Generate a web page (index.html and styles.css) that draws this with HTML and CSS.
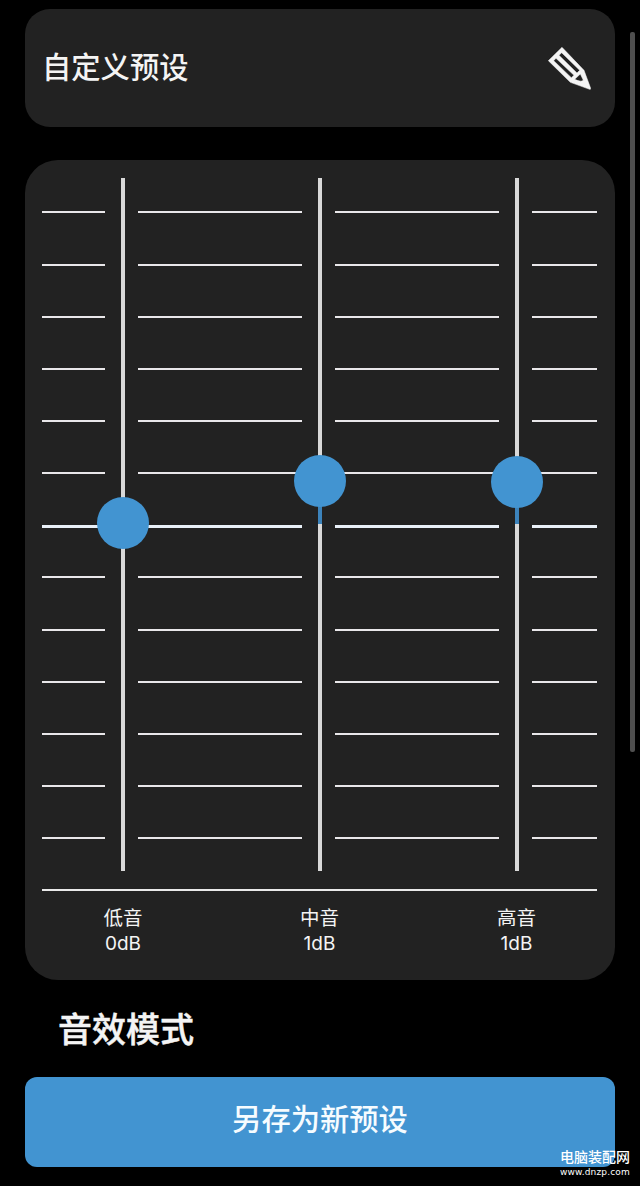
FILE: index.html
```html
<!DOCTYPE html>
<html lang="zh-CN">
<head>
    <meta charset="UTF-8">
    <meta name="viewport" content="width=device-width, initial-scale=1.0">
    <title>自定义预设</title>
    <link rel="stylesheet" href="styles.css">
</head>
<body>
    <div class="page">
        <div class="preset card">
            <span class="preset-name">自定义预设</span>
            <svg class="edit-icon" viewBox="84 140 129 129">
                <path fill="#f4f4f4" stroke="#f4f4f4" stroke-width="1.5" fill-rule="evenodd" d="M126 141L192 210L212 264Q212 268 209 267L151 246L85 181Z M125 157L117 165L171 218L179 210Z M108 174L101 181L154 232L162 225Z M181 221L190 240Q183 246 164 237Z"/>
            </svg>
        </div>

        <div class="equalizer card">
            <div class="board">
                <div class="ticks"><i></i><i></i><i></i><i></i><i></i><i></i><i class="zero"></i><i></i><i></i><i></i><i></i><i></i><i></i></div>
                <div class="track"><div class="knob" style="top: 319px"></div></div>
                <div class="ticks"><i></i><i></i><i></i><i></i><i></i><i></i><i class="zero"></i><i></i><i></i><i></i><i></i><i></i><i></i></div>
                <div class="track"><div class="level" style="top: 303px; height: 43px"></div><div class="knob" style="top: 277px"></div></div>
                <div class="ticks"><i></i><i></i><i></i><i></i><i></i><i></i><i class="zero"></i><i></i><i></i><i></i><i></i><i></i><i></i></div>
                <div class="track"><div class="level" style="top: 304px; height: 42px"></div><div class="knob" style="top: 278px"></div></div>
                <div class="ticks"><i></i><i></i><i></i><i></i><i></i><i></i><i class="zero"></i><i></i><i></i><i></i><i></i><i></i><i></i></div>
            </div>
            <div class="bands">
                <div class="band">低音<span>0dB</span></div>
                <div class="band">中音<span>1dB</span></div>
                <div class="band">高音<span>1dB</span></div>
            </div>
        </div>

        <h2>音效模式</h2>
        <button class="save-button">另存为新预设</button>
    </div>

    <div class="scrollbar"></div>
    <div class="watermark">
        <div class="site-name">电脑装配网</div>
        <div class="site-url">www.dnzp.com</div>
    </div>
</body>
</html>
```
FILE: styles.css
```css
* {
    box-sizing: border-box;
}
body {
    margin: 0;
    background-color: #000;
    color: #f4f4f4;
    font-family: "Noto Sans CJK SC", sans-serif;
    position: relative;
    height: 1186px;
    overflow: hidden;
}
.page {
    padding: 9px 25px 0;
}
.card {
    background-color: #222;
}
.preset {
    height: 118px;
    border-radius: 25px;
    padding: 0 24px 0 17px;
    display: flex;
    align-items: center;
    justify-content: space-between;
}
.preset-name {
    padding-bottom: 6px;
    font-size: 29.3px;
    font-weight: 500;
    line-height: 44px;
}
.edit-icon {
    width: 43px;
    height: 43px;
}
.equalizer {
    height: 820px;
    margin-top: 33px;
    border-radius: 33px;
    padding: 18px 18px 0 17px;
}
/* tick columns with a slider between each pair */
.board {
    height: 711px;
    display: grid;
    grid-template-columns: 63px 33px 164px 33px 164px 33px 65px;
}
.ticks {
    padding-top: 33.4px;
    display: grid;
    grid-template-rows: repeat(13, 52.17px);
}
.ticks i {
    height: 2px;
    background-color: #e9e7ea;
}
.ticks .zero {
    height: 3px;
    margin-top: 1px;
    background-color: #e9f0f8;
}
.track {
    position: relative;
    width: 4px;
    height: 693px;
    margin-left: 16px;
    background-color: #d9d9d9;
}
.level {
    position: absolute;
    left: 0;
    width: 4px;
    background-color: #3c83bb;
}
.knob {
    position: absolute;
    left: -24px;
    width: 52px;
    height: 52px;
    border-radius: 50%;
    background-color: #4294d1;
}
.bands {
    border-top: 2px solid #e9e9e9;
    padding-top: 12px;
    display: grid;
    grid-template-columns: 162px 231px 163px;
}
.band {
    font-size: 19.5px;
    line-height: 27px;
    text-align: center;
}
.band span {
    display: block;
    font-family: Inter, sans-serif;
    font-size: 19px;
    line-height: 28px;
}
h2 {
    margin: 23px 0 24px 33px;
    font-size: 34px;
    font-weight: 500;
    line-height: 50px;
    -webkit-text-stroke: 0.5px #f4f4f4;
}
.save-button {
    display: block;
    width: 100%;
    height: 90px;
    padding: 0 0 10px;
    border: none;
    border-radius: 12px;
    background-color: #4294d1;
    color: #f6fcff;
    font-family: inherit;
    font-size: 29.3px;
    font-weight: 500;
}
.scrollbar {
    position: absolute;
    top: 32px;
    right: 5px;
    width: 5px;
    height: 720px;
    border-radius: 2px;
    background-color: #4f4f4f;
}
.watermark {
    position: absolute;
    left: 560px;
    top: 1147px;
    color: #fff;
    white-space: nowrap;
}
.site-name {
    font-size: 14px;
    font-weight: 500;
    line-height: 19px;
}
.site-url {
    font-family: "DejaVu Sans", sans-serif;
    font-size: 9px;
    line-height: 12px;
    letter-spacing: 0.15px;
}
```
